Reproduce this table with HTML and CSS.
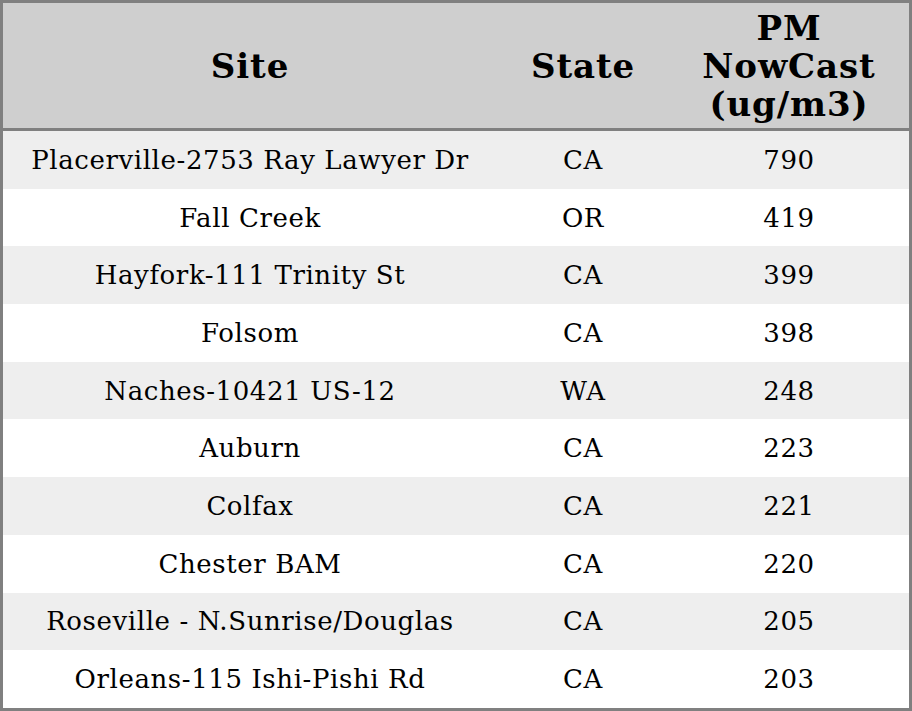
FILE: index.html
```html
<!DOCTYPE html>
<html>
<head>
<meta charset="utf-8">
<link rel="stylesheet" href="styles.css">
</head>
<body>
<table class="aq">
<colgroup><col class="c-site"><col class="c-state"><col class="c-pm"></colgroup>
<thead>
<tr><th>Site</th><th>State</th><th>PM<br>NowCast<br>(ug/m3)</th></tr>
</thead>
<tbody>
<tr><td>Placerville-2753 Ray Lawyer Dr</td><td>CA</td><td>790</td></tr>
<tr><td>Fall Creek</td><td>OR</td><td>419</td></tr>
<tr><td>Hayfork-111 Trinity St</td><td>CA</td><td>399</td></tr>
<tr><td>Folsom</td><td>CA</td><td>398</td></tr>
<tr><td>Naches-10421 US-12</td><td>WA</td><td>248</td></tr>
<tr><td>Auburn</td><td>CA</td><td>223</td></tr>
<tr><td>Colfax</td><td>CA</td><td>221</td></tr>
<tr><td>Chester BAM</td><td>CA</td><td>220</td></tr>
<tr><td>Roseville - N.Sunrise/Douglas</td><td>CA</td><td>205</td></tr>
<tr><td>Orleans-115 Ishi-Pishi Rd</td><td>CA</td><td>203</td></tr>
</tbody>
</table>
</body>
</html>
```
FILE: styles.css
```css
html, body {
  margin: 0;
  padding: 0;
  background: #ffffff;
}
.aq {
  width: 912px;
  height: 711px;
  border: 3px solid #808080;
  border-collapse: separate;
  border-spacing: 0;
  table-layout: fixed;
  font-family: "DejaVu Serif", serif;
  color: #000;
}
.c-site { width: 494px; }
.c-state { width: 172px; }
.c-pm { width: 240px; }
.aq th {
  background: #cfcfcf;
  font-size: 34px;
  letter-spacing: 0.9px;
  font-weight: bold;
  line-height: 38px;
  height: 125px;
  padding: 0;
  text-align: center;
  vertical-align: middle;
  border-bottom: 3px solid #808080;
}
.aq td {
  font-size: 26px;
  letter-spacing: 0.6px;
  text-align: center;
  vertical-align: middle;
  padding: 0;
  height: 57.6px;
}
.aq tbody tr:nth-child(odd) td {
  background: #eeeeee;
}
.aq tbody tr:nth-child(even) td {
  background: #ffffff;
}
```
